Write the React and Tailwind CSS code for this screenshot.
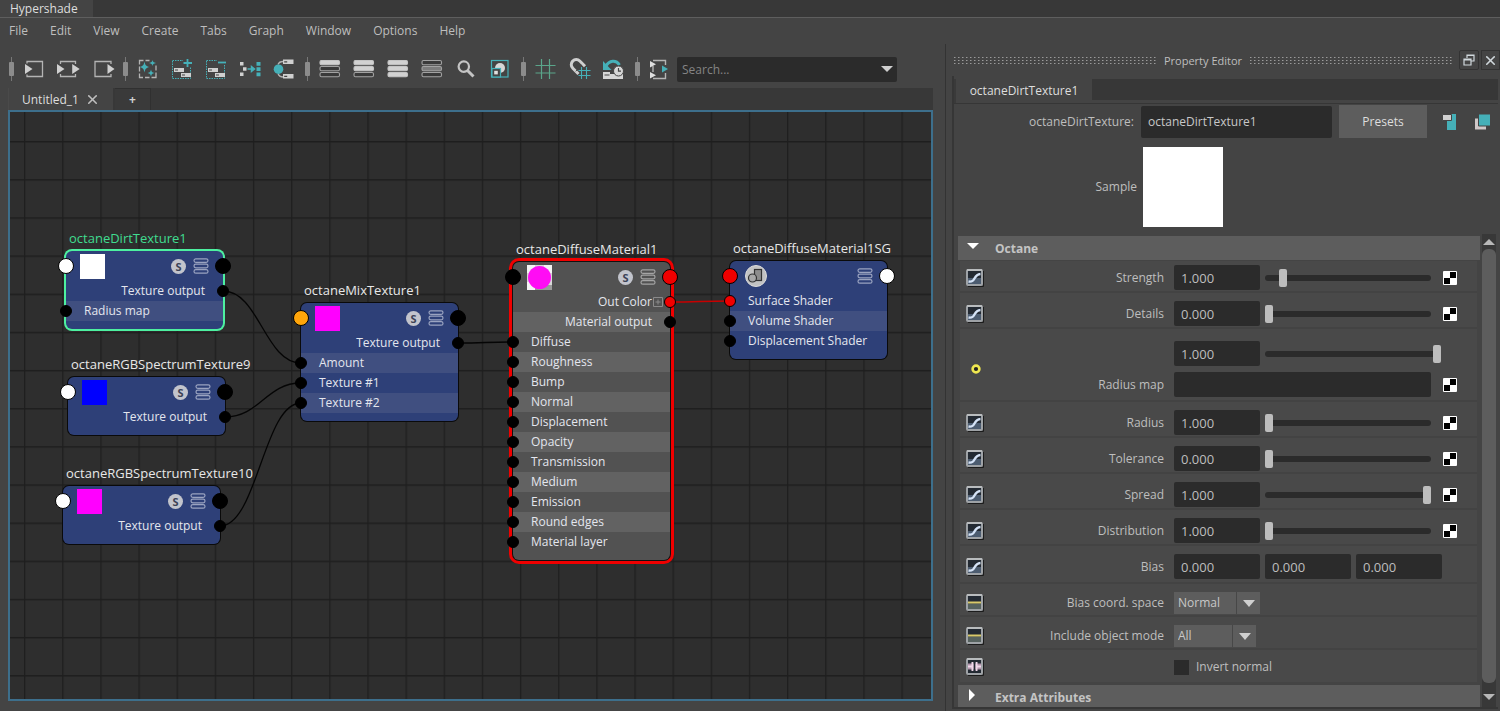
import { useState } from "react";
import { X } from "lucide-react";

const menus = ["File", "Edit", "View", "Create", "Tabs", "Graph", "Window", "Options", "Help"];

const LIGHT = "#c4c4c4";
const TEAL = "#45b0b8";

/* ── Toolbar icons, all drawn on a 24x24 box ───────────────────────────── */

function Bars({ fills }) {
  return (
    <>
      {fills.map((fill, i) => (
        <rect key={i} x="2" y={3.5 + i * 6} width="19.5" height="4.2" rx="1.4" fill={fill} stroke={fill === "#d2d2d2" ? "#c4c4c4" : "#a2a2a2"} strokeWidth="1.1" />
      ))}
    </>
  );
}

function SlotBars() {
  return (
    <>
      <rect x="2.5" y="3.5" width="18" height="18" fill="none" stroke={TEAL} strokeWidth="1" strokeDasharray="1.5 1" />
      <path d="M4 11h10v4H4zM11 16h10v4H11z" fill="#d0d0d0" />
      <path d="M5 12.5h3v1H5zM12 17.5h3v1h-3z" fill="#444" />
    </>
  );
}

const icons = {
  input: (
    <>
      <path d="M5 6.500V4.500H20.500V19.500H5V17.500" fill="none" stroke="#b4b4b4" strokeWidth="1.3" />
      <path d="M3 7l7.500 5L3 17z" fill="#d0d0d0" />
    </>
  ),
  inputOutput: (
    <>
      <path d="M4.500 7V4.500H19.500V7M4.500 17V19.500H19.500V17" fill="none" stroke="#b4b4b4" strokeWidth="1.3" />
      <path d="M1 7l7.500 5L1 17zM16.200 7l7.500 5-7.500 5z" fill="#d0d0d0" />
    </>
  ),
  output: (
    <>
      <path d="M21 7V4.500H5V19.500H21V17" fill="none" stroke="#b4b4b4" strokeWidth="1.3" />
      <path d="M17.500 7l7 5-7 5z" fill="#d0d0d0" />
    </>
  ),
  rearrange: (
    <>
      <path d="M3.500 7.500V3.500H7.500M9.500 3.500h4M20 8.500v5M20 15.500v5h-4.500M13.500 20.500H9M3.500 16.500v4H7M3.500 9.500v5" fill="none" stroke="#b4b4b4" strokeWidth="1.3" />
      <path d="M8.500 4.500c.8 3.800 1.400 4.600 5 5.500-3.600.9-4.200 1.700-5 5.500-.8-3.800-1.400-4.600-5-5.500 3.600-.9 4.200-1.700 5-5.500z" fill={TEAL} />
      <path d="M16.500 3c.5 2 .9 2.500 3.500 3-2.600.5-3 1-3.500 3-.5-2-.9-2.500-3.500-3 2.600-.5 3-1 3.500-3zM15 12.500c.6 2.400 1 2.900 3.500 3.500-2.500.6-2.900 1.100-3.500 3.500-.6-2.400-1-2.900-3.500-3.500 2.500-.6 2.900-1.100 3.500-3.500z" fill={TEAL} />
    </>
  ),
  add: (
    <>
      <SlotBars />
      <path d="M13 2h9v8h-9z" fill="#444" />
      <path d="M17.500 2v8M13.500 6h8.500" stroke={TEAL} strokeWidth="1.800" />
    </>
  ),
  remove: (
    <>
      <SlotBars />
      <path d="M13 2h9v6h-9z" fill="#444" />
      <path d="M14 5.500h8" stroke={TEAL} strokeWidth="1.800" />
    </>
  ),
  distribute: (
    <>
      <path d="M2 5h3.500v3.500H2zM5 10.200h3.500v3.500H5zM2 15.500h3.500V19H2z" fill="#d0d0d0" />
      <path d="M9.500 12h5M13.500 9.500l3 2.500-3 2.500z" fill={TEAL} stroke={TEAL} strokeWidth="1.500" />
      <path d="M18.500 5h4v3.800h-4zM18.500 10.200h4V14h-4zM18.500 15.400h4v3.800h-4z" fill={TEAL} />
    </>
  ),
  connect: (
    <>
      <path d="M6 7.500c1-2.500 2.500-3 5-3M6 16.500c1 3 2.500 3.500 5 3.500" fill="none" stroke="#b4b4b4" strokeWidth="1.300" />
      <circle cx="6.500" cy="12.200" r="4.800" fill={TEAL} />
      <path d="M11 2.500h10.500v4.500H11zM11 17h10.500v4.500H11z" fill="#d0d0d0" />
      <path d="M12.200 4.200h3v1.300h-3zM12.200 18.700h3V20h-3z" fill="#444" />
    </>
  ),
  bars1: <Bars fills={["#d2d2d2", "#3a3a3a", "#3a3a3a"]} />,
  bars2: <Bars fills={["#d2d2d2", "#d2d2d2", "#3a3a3a"]} />,
  bars3: <Bars fills={["#d2d2d2", "#d2d2d2", "#d2d2d2"]} />,
  bars4: <Bars fills={["#3a3a3a", "#7c7c7c", "#3a3a3a"]} />,
  find: (
    <>
      <circle cx="9.800" cy="9.600" r="5.200" fill="none" stroke={LIGHT} strokeWidth="2.200" />
      <path d="M13.500 13.500l6 6" stroke={LIGHT} strokeWidth="3" />
    </>
  ),
  swatch: (
    <>
      <rect x="3.500" y="3.500" width="16.500" height="16.500" fill="none" stroke={TEAL} strokeWidth="1.200" />
      <circle cx="12" cy="11" r="5" fill="#d6d6d6" />
      <rect x="4" y="11.500" width="8.500" height="8.500" fill="#444" stroke={TEAL} strokeWidth="1.200" />
      <rect x="6.200" y="13.800" width="3.600" height="3.600" fill="#e0e0e0" />
    </>
  ),
  grid: <path d="M7.500 2v20M15.500 2v20M1.500 8.500h20M1.500 16h20" fill="none" stroke="#5aa58a" strokeWidth="1.200" />,
  snap: (
    <>
      <path d="M10.500 17L4.800 11.200A5 5 0 0 1 11.800 4L17 9.200" fill="none" stroke="#cfcfcf" strokeWidth="3" />
      <path d="M7.800 14.300l2-2M14 7.800l-1.800 1.800" stroke="#444" strokeWidth="1" />
      <path d="M13.500 10v12M18.500 10v12M10.500 13.500h12M10.500 18.500h12" stroke={TEAL} strokeWidth="1.100" />
    </>
  ),
  restore: (
    <>
      <path d="M3.500 9.500c4-6.500 10.500-7 14-1.500" fill="none" stroke={TEAL} strokeWidth="3" />
      <path d="M1 4v9h8.500z" fill={TEAL} />
      <path d="M1 15h7v2h13v5H1z" fill="#d6d6d6" />
      <circle cx="16.500" cy="14" r="5" fill="#d6d6d6" stroke="#444" strokeWidth="1" />
      <path d="M16.500 11v3.200h2.500M2.500 18h5" fill="none" stroke="#444" strokeWidth="1.200" />
    </>
  ),
  container: (
    <>
      <path d="M5 3.500h12.500V8M17.500 16v5.500H5M5 9v6" fill="none" stroke="#b4b4b4" strokeWidth="1.400" />
      <path d="M2 4l6 3.200L2 10.500zM2 15l6 3.200-6 3.300z" fill="#e0e0e0" />
      <path d="M14 8.500l6 3.500-6 3.500z" fill={TEAL} />
    </>
  ),
};

const toolbar = [
  ["input", "inputOutput", "output"],
  ["rearrange", "add", "remove", "distribute", "connect"],
  ["bars1", "bars2", "bars3", "bars4", "find", "swatch"],
  ["grid", "snap", "restore"],
  ["container"],
];

function Toolbar() {
  return (
    <div className="flex h-[38px] items-center pl-[5px] mt-[6px]">
      {toolbar.map((group, i) => (
        <div key={i} className="flex items-center">
          <svg viewBox="0 0 12 24" className="w-3 h-6" aria-hidden="true">
            <path d="M6.500 0v24" stroke="#777" />
            <rect x="4" y="5" width="5" height="14" rx="1" fill="#8c8c8c" />
          </svg>
          {group.map((name) => (
            <button key={name} type="button" aria-label={name} className="w-[34px] h-7 flex items-center justify-center">
              <svg viewBox="0 0 24 24" className="w-6 h-6 overflow-visible" aria-hidden="true">{icons[name]}</svg>
            </button>
          ))}
        </div>
      ))}
      <div className="flex h-[25px] w-[220px] items-center rounded-xs bg-[#2b2b2b]">
        <input aria-label="Search" placeholder="Search..." className="min-w-0 flex-1 bg-transparent pl-[5px] pt-[2px] outline-none placeholder:text-[#848484]" />
        <button type="button" aria-label="Search history" className="flex w-5 justify-center">
          <svg viewBox="0 0 12 6" className="w-3 h-[6px]"><path d="M0 0h12L6 6z" fill="#cfcfcf" /></svg>
        </button>
      </div>
    </div>
  );
}

/* ── Node graph ────────────────────────────────────────────────────────── */

const nodes = [
  {
    name: "octaneDirtTexture1", x: 56, y: 139, selected: true, swatch: "#ffffff", left: "#ffffff",
    rows: [{ out: "Texture output" }, { in: "Radius map" }],
  },
  {
    name: "octaneRGBSpectrumTexture9", x: 58, y: 265, swatch: "#0000ff", left: "#ffffff",
    rows: [{ out: "Texture output" }],
  },
  {
    name: "octaneRGBSpectrumTexture10", x: 53, y: 374, swatch: "#ff00ff", left: "#ffffff",
    rows: [{ out: "Texture output" }],
  },
  {
    name: "octaneMixTexture1", x: 291, y: 191, swatch: "#ff00ff", left: "#ffa50a",
    rows: [{ out: "Texture output" }, { in: "Amount" }, { in: "Texture #1" }, { in: "Texture #2" }],
  },
  {
    name: "octaneDiffuseMaterial1", x: 503, y: 150, material: true, left: "#000000", right: "#f00000",
    rows: [
      { out: "Out Color", color: "#f00000", expand: true },
      { out: "Material output" },
      ...["Diffuse", "Roughness", "Bump", "Normal", "Displacement", "Opacity", "Transmission", "Medium", "Emission", "Round edges", "Material layer"].map((n) => ({ in: n })),
    ],
  },
  {
    name: "octaneDiffuseMaterial1SG", x: 720, y: 149, group: true, left: "#f00000", right: "#ffffff",
    rows: [{ in: "Surface Shader", color: "#f00000" }, { in: "Volume Shader" }, { in: "Displacement Shader" }],
  },
];

// from x, from y, to x, to y
const wires = [
  { p: [213, 179, 291, 251] },
  { p: [215, 305, 291, 271] },
  { p: [210, 414, 291, 291] },
  { p: [448, 231, 503, 230] },
  { p: [660, 190, 720, 189], color: "#c80000" },
];

function wirePath([x1, y1, x2, y2]) {
  const dx = (x2 - x1) * 0.46;
  return `M${x1} ${y1}C${x1 + dx} ${y1} ${x2 - dx} ${y2} ${x2} ${y2}`;
}

function Port({ side, big, color = "#000000" }) {
  return (
    <span
      className={`absolute top-1/2 -translate-y-1/2 rounded-full border-black ${big ? "size-4 border" : "size-3 border"} ${
        side === "left" ? (big ? "-left-2" : "-left-[6px]") : big ? "-right-2" : "-right-[6px]"
      }`}
      style={{ backgroundColor: color }}
    />
  );
}

function NodeThumb({ node }) {
  if (node.material) {
    return (
      <svg viewBox="0 0 25 25" className="size-[25px]" aria-hidden="true">
        <path d="M0 0h25v25H0z" fill="#d8d8d8" />
        <path d="M0 0h8v8H0zM17 0h8v8h-8zM0 17h8v8H0z" fill="#f4f4f4" />
        <path d="M8 20h17v5H8z" fill="#9a9a9a" />
        <circle cx="12.500" cy="12.500" r="11.500" fill="#ff0cf4" />
      </svg>
    );
  }
  if (node.group) {
    return (
      <svg viewBox="0 0 22 22" className="ml-px size-[22px]" aria-hidden="true">
        <circle cx="11" cy="11" r="10.500" fill="#c3c3c3" stroke="#dcdcdc" />
        <rect x="9.500" y="4.500" width="7" height="11" fill="#8d8d8d" stroke="#333" strokeWidth="1.200" />
        <circle cx="7.500" cy="13" r="4" fill="#a8a8a8" stroke="#333" strokeWidth="1.200" />
      </svg>
    );
  }
  return <span className="size-[25px]" style={{ backgroundColor: node.swatch }} />;
}

function GraphNode({ node }) {
  const line = node.material ? "#a4a4a4" : "#9aa3c0";
  return (
    <div className="absolute w-[157px]" style={{ left: node.x, top: node.y }}>
      <span className={`absolute bottom-full left-[3px] whitespace-nowrap pb-[4px] text-[13px] leading-[18px] ${node.selected ? "text-[#40dc90]" : "text-[#e8e8e8]"}`}>
        {node.name}
      </span>
      <div
        className={`rounded-md pb-2 text-[#e4e6ee] ${node.material ? "bg-[#525252]" : "bg-[#2e4078]"} ${
          node.selected
            ? "shadow-[0_0_0_2px_#4df0a0]"
            : node.material
              ? "shadow-[0_0_0_1px_#111,0_0_0_4px_#f00000]"
              : "shadow-[0_0_0_1px_#0a0a0a]"
        }`}
      >
        <div className="relative flex h-[30px] items-center pl-[14px] pr-[14px]">
          <Port side="left" big color={node.left} />
          <NodeThumb node={node} />
          <div className="ml-auto flex items-center gap-[7px]">
            {!node.group && (
              <span className="flex size-[15px] items-center justify-center rounded-full bg-[#c2c4cc] text-[11px] leading-none font-bold text-[#3c4256]">S</span>
            )}
            <svg viewBox="0 0 16 16" className="size-4" fill="none" stroke={line} strokeWidth="1.200" aria-hidden="true">
              <rect x="1" y=".8" width="14" height="3.600" rx="1.800" />
              <rect x="1" y="6.200" width="14" height="3.600" rx="1.800" />
              <rect x="1" y="11.600" width="14" height="3.600" rx="1.800" />
            </svg>
          </div>
          <Port side="right" big color={node.right} />
        </div>
        {node.rows.map((row, i) => (
          <div key={i} className={`relative flex h-5 items-center pl-[18px] ${i % 2 ? (node.material ? "bg-[#626262]" : "bg-[#404f80]") : ""}`}>
            {row.in ? (
              <>
                <Port side="left" color={row.color} />
                <span>{row.in}</span>
              </>
            ) : (
              <>
                <span className="ml-auto mr-[18px]">{row.out}</span>
                {row.expand && (
                  <svg viewBox="0 0 10 10" className="absolute right-[7px] size-[10px]" fill="none" stroke="#8a8a8a" aria-hidden="true">
                    <path d="M.5.5h9v9h-9zM5 2.500v5M2.500 5h5" />
                  </svg>
                )}
                <Port side="right" color={row.color} />
              </>
            )}
          </div>
        ))}
      </div>
    </div>
  );
}

function Graph() {
  return (
    <div className="relative min-h-0 flex-1 overflow-hidden border-2 border-[#3d6f8c] bg-[#2e2e2e]">
      <svg className="absolute inset-0 w-full h-full" aria-hidden="true">
        <defs>
          <pattern id="cells" x="14" y="29" width="38.150" height="38.150" patternUnits="userSpaceOnUse">
            <path d="M.7 0V39M0 .7H39" stroke="#1e1e1e" strokeWidth="1.300" />
          </pattern>
        </defs>
        <rect width="100%" height="100%" fill="url(#cells)" />
        {wires.map((w, i) => (
          <path key={i} d={wirePath(w.p)} fill="none" stroke={w.color || "#050505"} strokeWidth="1.300" />
        ))}
      </svg>
      {nodes.map((n) => <GraphNode key={n.name} node={n} />)}
    </div>
  );
}

/* ── Property editor ───────────────────────────────────────────────────── */

function Dots() {
  return (
    <svg className="h-[7px] min-w-0 flex-1" aria-hidden="true">
      <defs>
        <pattern id="grip" width="4" height="3" patternUnits="userSpaceOnUse">
          <rect width="1.500" height="1" fill="#9a9a9a" />
        </pattern>
      </defs>
      <rect width="100%" height="100%" fill="url(#grip)" />
    </svg>
  );
}

function PinIcon({ kind }) {
  return (
    <svg viewBox="0 0 18 18" className="w-[18px] h-[18px]" aria-hidden="true">
      <path d="M2 17.500h15.500V2" fill="none" stroke="#1c1c1c" strokeWidth="1" />
      <rect x="1" y="1" width="15" height="15" rx="1" fill="#232a33" stroke="#9ea2a6" strokeWidth="2" />
      <path d="M1 1h15" stroke="#c2c4c6" strokeWidth="1.500" />
      {kind === "curve" && (
        <>
          <path d="M2 9h13v6H2z" fill="#4c5c70" />
          <path d="M2.500 12.500c8 1.500 4-7 12-7.500" fill="none" stroke="#d4e2f6" strokeWidth="2.400" />
        </>
      )}
      {kind === "line" && (
        <>
          <path d="M2 9.500h13V15H2z" fill="#56625f" />
          <path d="M2 8.500h13" stroke="#d8c96a" strokeWidth="2" />
        </>
      )}
      {kind === "bool" && (
        <>
          <path d="M2 5.500h13v6H2z" fill="#b394ac" />
          <path d="M2 8.500h4M11 8.500h4M6.500 4v9M10.500 4v9" stroke="#f0d8ea" strokeWidth="2" />
          <path d="M8.500 2v13" stroke="#232a33" strokeWidth="1.500" />
        </>
      )}
    </svg>
  );
}

function RowIcon({ kind }) {
  return <span className="flex w-[30px] shrink-0 pl-[6px]"><PinIcon kind={kind} /></span>;
}

function MapButton({ label }) {
  return (
    <button type="button" aria-label={`${label} map`} className="ml-3 mr-5 shrink-0">
      <svg viewBox="0 0 14 14" className="size-[14px]" aria-hidden="true">
        <rect width="14" height="14" rx="1" fill="#fff" />
        <path d="M7 1h6v6H7zM1 7h6v6H1z" fill="#000" />
      </svg>
    </button>
  );
}

function NumberBox({ label, value, id }) {
  return (
    <input
      id={id}
      aria-label={id ? undefined : label}
      defaultValue={value}
      className="h-[25px] w-[86px] shrink-0 rounded-xs bg-[#2b2b2b] px-[7px] pt-px text-[13px] outline-none"
    />
  );
}

function Slider({ label, pos }) {
  return (
    <input
      type="range"
      aria-label={`${label} slider`}
      defaultValue={pos}
      className="ml-[5px] h-[18px] min-w-0 flex-1 appearance-none bg-transparent
        [&::-webkit-slider-runnable-track]:h-[6px] [&::-webkit-slider-runnable-track]:rounded-sm [&::-webkit-slider-runnable-track]:bg-[#2b2b2b]
        [&::-webkit-slider-thumb]:-mt-[6px] [&::-webkit-slider-thumb]:h-[18px] [&::-webkit-slider-thumb]:w-2 [&::-webkit-slider-thumb]:appearance-none
        [&::-webkit-slider-thumb]:rounded-xs [&::-webkit-slider-thumb]:bg-[#bdbdbd]"
    />
  );
}

function FloatRow({ id, label, value, pos, first }) {
  return (
    <div className={`flex items-center border-b-2 border-[#434343] pb-px ${first ? "pt-1" : "pt-2"}`}>
      <RowIcon kind="curve" />
      <label htmlFor={id} className="mr-[10px] flex-none w-[174px] text-right">{label}</label>
      <NumberBox id={id} value={value} />
      <Slider label={label} pos={pos} />
      <MapButton label={label} />
    </div>
  );
}

function SelectRow({ id, label, value, options, width }) {
  return (
    <div className="flex items-center border-b-2 border-[#434343] pb-px pt-2">
      <RowIcon kind="line" />
      <label htmlFor={id} className="mr-[10px] w-[174px] text-right">{label}</label>
      <div className={`relative ${width}`}>
        <select id={id} defaultValue={value} className="h-[22px] w-full appearance-none bg-[#5d5d5d] pl-1 text-[#c8c8c8] outline-none">
          {options.map((o) => <option key={o}>{o}</option>)}
        </select>
        <span className="pointer-events-none absolute inset-y-0 right-0 flex w-6 items-center justify-center border-l border-[#474747]">
          <svg viewBox="0 0 12 7" className="w-3 h-[7px]"><path d="M0 0h12L6 7z" fill="#cfcfcf" /></svg>
        </span>
      </div>
    </div>
  );
}

const floats = [
  { id: "radius", label: "Radius", value: "1.000", pos: 0 },
  { id: "tolerance", label: "Tolerance", value: "0.000", pos: 0 },
  { id: "spread", label: "Spread", value: "1.000", pos: 100 },
  { id: "distribution", label: "Distribution", value: "1.000", pos: 0 },
];

function OctaneRows() {
  return (
    <div className="ml-[2px] mr-[3px] mt-px bg-[#494949]">
      <FloatRow id="strength" label="Strength" value="1.000" pos={9} first />
      <FloatRow id="details" label="Details" value="0.000" pos={0} />

      <div className="flex items-center border-b-2 border-[#434343] pt-3 pb-[3px]">
        <span className="flex w-[30px] shrink-0 pl-[11px]">
          <svg viewBox="0 0 10 10" className="size-[10px]" aria-hidden="true">
            <circle cx="5" cy="5" r="3.400" fill="#222" stroke="#f0e850" strokeWidth="2.600" />
          </svg>
        </span>
        <div className="flex min-w-0 flex-1 flex-col gap-[6px]">
          <div className="flex items-center pl-[184px] pr-[36px]">
            <NumberBox label="Radius map value" value="1.000" />
            <Slider label="Radius map" pos={100} />
          </div>
          <div className="flex items-center">
            <label htmlFor="radiusMap" className="mr-[10px] w-[174px] shrink-0 text-right">Radius map</label>
            <input id="radiusMap" className="h-[25px] min-w-0 flex-1 rounded-xs bg-[#2b2b2b] px-2 outline-none" />
            <MapButton label="Radius" />
          </div>
        </div>
      </div>

      {floats.map((f) => <FloatRow key={f.id} {...f} />)}

      <div className="flex items-center border-b-2 border-[#434343] pb-[3px] pt-2">
        <RowIcon kind="curve" />
        <label htmlFor="biasX" className="mr-[10px] w-[174px] text-right">Bias</label>
        <div className="flex gap-[5px]">
          <NumberBox id="biasX" value="0.000" />
          <NumberBox label="Bias Y" value="0.000" />
          <NumberBox label="Bias Z" value="0.000" />
        </div>
      </div>

      <SelectRow id="space" label="Bias coord. space" value="Normal" options={["Normal", "World", "Object"]} width="w-[86px]" />
      <SelectRow id="mode" label="Include object mode" value="All" options={["All", "Self", "Others"]} width="w-[82px]" />

      <div className="flex h-8 items-center pt-[2px]">
        <RowIcon kind="bool" />
        <label className="ml-[184px] flex items-center gap-[7px]">
          <input type="checkbox" className="size-[15px] appearance-none bg-[#2b2b2b] checked:bg-[#9a9a9a]" />
          Invert normal
        </label>
      </div>
    </div>
  );
}

function Section({ title, open, onToggle }) {
  return (
    <button type="button" onClick={onToggle} aria-expanded={open} className="flex h-6 w-full shrink-0 items-center bg-[#5d5d5d] text-left font-bold text-[#c4c4c4]">
      <span className="flex w-[37px] pl-[9px] pb-1">
        {open ? (
          <svg viewBox="0 0 12 6" className="w-3 h-[6px]"><path d="M0 0h12L6 6z" fill="#fff" /></svg>
        ) : (
          <svg viewBox="0 0 6 12" className="ml-[2px] w-[6px] h-3"><path d="M0 0v12l6-6z" fill="#fff" /></svg>
        )}
      </span>
      <span className="pt-[2px]">{title}</span>
    </button>
  );
}

function PropertyEditor() {
  const [open, setOpen] = useState(true);

  return (
    <aside className="flex min-w-[520px] w-[37%] shrink-0 flex-col border-l border-[#333] pb-[2px] mt-[26px]">
      <div className="flex h-8 items-center pl-[8px]">
        <Dots />
        <span className="pl-[6px] pr-2 pt-px text-[11px]">Property Editor</span>
        <Dots />
        <button type="button" aria-label="Float panel" className="ml-[5px] flex size-5 items-center justify-center rounded-xs border border-[#333]">
          <svg viewBox="0 0 12 12" className="size-3" fill="none" stroke="#d0d8dc" strokeWidth="1.200" aria-hidden="true">
            <path d="M4 4V1h7v6H8M1 5h7v6H1zM1 6h7M4 1.500h7" />
          </svg>
        </button>
        <button type="button" aria-label="Close panel" className="ml-[2px] flex h-5 w-[19px] items-center justify-center border border-[#333]">
          <X size={15} strokeWidth={2.5} color="#d0d8dc" />
        </button>
      </div>

      <div className="ml-[6px] mr-[2px] flex min-h-0 flex-1 flex-col border-b-2 border-l-2 border-[#363636] pt-[3px]">
        <div role="tablist" className="flex h-[21px] bg-[#373737]">
          <button type="button" role="tab" aria-selected="true" className="flex h-6 w-[138px] items-center justify-center border-l-2 border-[#3a3a3a] bg-[#444] text-[#dedede]">
            octaneDirtTexture1
          </button>
        </div>
        <div className="mt-[3px] flex items-center border-t border-[#363636] pt-px pr-[6px]">
          <label htmlFor="nodeName" className="mr-[7px] w-[180px] shrink-0 text-right">octaneDirtTexture:</label>
          <input id="nodeName" defaultValue="octaneDirtTexture1" className="h-8 min-w-0 flex-1 rounded-xs bg-[#2b2b2b] px-[7px] text-[#c8c8c8] outline-none" />
          <button type="button" className="ml-[7px] h-[33px] w-[88px] bg-[#5d5d5d] text-[#dedede]">Presets</button>
          <button type="button" aria-label="Show inputs" className="ml-[15px]">
            <svg viewBox="0 0 16 18" className="w-4 h-[18px]" aria-hidden="true">
              <path d="M5 1h9v16H5z" fill={TEAL} />
              <path d="M.5 1.500h9v6h-9z" fill="#d0d0d0" stroke="#444" />
            </svg>
          </button>
          <button type="button" aria-label="Copy tab" className="ml-[16px]">
            <svg viewBox="0 0 18 18" className="w-[18px] h-[18px]" aria-hidden="true">
              <path d="M1 5.500h11v11H1z" fill="#d0c8c8" />
              <path d="M4.500 1h12v12h-12z" fill={TEAL} stroke="#444" />
            </svg>
          </button>
        </div>

        <div className="mt-[9px] flex items-center">
          <span className="mr-[6px] w-[183px] text-right">Sample</span>
          <span className="size-20 bg-white" />
        </div>

        <div className="mt-[7px] flex min-h-0 flex-1">
          <div className="flex min-w-0 flex-1 flex-col overflow-hidden pl-1 pt-[2px]">
            <Section title="Octane" open={open} onToggle={() => setOpen(!open)} />
            {open && <OctaneRows />}
            <div className="mt-[3px]">
              <Section title="Extra Attributes" open={false} />
            </div>
          </div>
          <div className="ml-[2px] mr-[2px] flex w-[14px] flex-col bg-[#383838]">
            <button type="button" aria-label="Scroll up" className="flex h-[15px] items-center justify-center">
              <svg viewBox="0 0 12 6" className="w-3 h-[6px]"><path d="M0 6h12L6 0z" fill="#b8b8b8" /></svg>
            </button>
            <div className="flex-1 rounded-md bg-[#5d5d5d]" />
            <button type="button" aria-label="Scroll down" className="flex h-6 items-center justify-center pt-1">
              <svg viewBox="0 0 12 6" className="w-3 h-[6px]"><path d="M0 0h12L6 6z" fill="#b8b8b8" /></svg>
            </button>
          </div>
        </div>
      </div>
    </aside>
  );
}

export default function App() {
  return (
    <div className="flex h-screen flex-col overflow-hidden bg-[#444] font-['Open_Sans','Noto_Sans',sans-serif] text-[12px] leading-[18px] text-[#bebebe]">
      {/* Window tab */}
      <header className="flex h-[18px] shrink-0 border-b border-[#5e5e5e] bg-[#383838]">
        <h1 className="flex w-[93px] items-center bg-[#444] pl-[10px] text-[#dedede]">Hypershade</h1>
      </header>

      <div className="flex min-h-0 flex-1">
        <main className="flex min-w-0 flex-1 flex-col pb-[10px]">
          <nav className="flex h-[26px] items-center gap-[22px] pl-[9px]">
            {menus.map((m) => <button key={m} type="button">{m}</button>)}
          </nav>
          <Toolbar />

          <div className="ml-2 mr-3 flex min-h-0 flex-1 flex-col bg-[#383838]">
            <div role="tablist" className="flex h-[22px] shrink-0 gap-[2px]">
              <div className="flex w-[105px] items-center border-l border-[#4a4a4a] bg-[#444] pt-px pl-[13px]">
                <button type="button" role="tab" aria-selected="true" className="text-[#dedede]">Untitled_1</button>
                <button type="button" aria-label="Close tab" className="ml-[6px]">
                  <X size={15} strokeWidth={2.5} />
                </button>
              </div>
              <button type="button" aria-label="New tab" className="w-[36px] border-r border-t border-[#303030] bg-[#3a3a3a] font-bold text-[#d0d0d0]">+</button>
            </div>
            <Graph />
          </div>
        </main>
        <PropertyEditor />
      </div>
    </div>
  );
}
